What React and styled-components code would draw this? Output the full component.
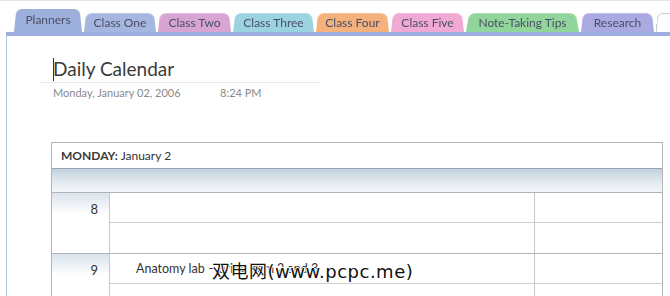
import React from 'react'
import styled, { createGlobalStyle } from 'styled-components'

const GlobalStyle = createGlobalStyle`
    html, body { margin: 0; padding: 0; background: #fff; }
    body { font-family: Lato, "Liberation Sans", sans-serif; }
`

const tabs = [
    { label: 'Planners', color: '#9db0dc', w: 68, active: true },
    { label: 'Class One', color: '#a5b6e0', w: 72 },
    { label: 'Class Two', color: '#d8a4d3', w: 73 },
    { label: 'Class Three', color: '#9bd4e0', w: 81 },
    { label: 'Class Four', color: '#f4b17c', w: 73 },
    { label: 'Class Five', color: '#f1a8d3', w: 73 },
    { label: 'Note-Taking Tips', color: '#91d59d', w: 113 },
    { label: 'Research', color: '#aba9e1', w: 73 },
    { label: '', color: '#fff', w: 40, outline: true },
]

const hours = [
    { hour: 8, items: ['', ''] },
    { hour: 9, items: ['Anatomy lab \u2013 bring item 2 and 3', ''] },
]

function App() {
    return (
        <Wrap>
            <GlobalStyle />
            <TabBar>
                {tabs.map((t, i) => (
                    <Tab key={i} $color={t.color} $w={t.w} $active={t.active} $outline={t.outline}>
                        {t.label}
                    </Tab>
                ))}
            </TabBar>
            <Strip />
            <Page>
                <TitleBlock>
                    <Caret />
                    <Title>Daily Calendar</Title>
                </TitleBlock>
                <DateLine>
                    <DateText>Monday, January 02, 2006</DateText>
                    <span>8:24 PM</span>
                </DateLine>
                <Table>
                    <DayHeader><b>MONDAY:</b> January 2</DayHeader>
                    <Band />
                    {hours.map(h => (
                        <HourRow key={h.hour}>
                            <TimeCell>{h.hour}</TimeCell>
                            {h.items.map((item, i) => (
                                <React.Fragment key={i}>
                                    <NoteCell $first={i === 0}>{item}</NoteCell>
                                    <SideCell $first={i === 0} />
                                </React.Fragment>
                            ))}
                        </HourRow>
                    ))}
                </Table>
            </Page>
            <Watermark>双电网(www.pcpc.me)</Watermark>
        </Wrap>
    )
}

const Wrap = styled.div`
    position: relative;
    width: 670px;
    height: 296px;
    overflow: hidden;
    border-top: 1px solid #e4e4e4;
    box-sizing: border-box;
    display: flex;
    flex-direction: column;
`

const TabBar = styled.div`
    display: flex;
    align-items: flex-end;
    gap: 2px;
    height: 31px;
    padding-left: 14px;
    flex-shrink: 0;
`

const Tab = styled.div`
    position: relative;
    z-index: ${p => p.$active ? 2 : 1};
    flex-shrink: 0;
    width: ${p => p.$w}px;
    height: ${p => p.$active ? 25 : 20}px;
    display: flex;
    align-items: center;
    justify-content: center;
    font-size: 12px;
    color: #4a4f66;
    white-space: nowrap;

    &::before {
        content: '';
        position: absolute;
        inset: 0;
        z-index: -1;
        background: ${p => p.$color};
        border: ${p => p.$outline ? '1px solid #cfcfcf' : 'none'};
        border-bottom: none;
        border-radius: 6px 6px 0 0;
        transform: perspective(40px) rotateX(7deg);
        transform-origin: bottom;
    }
`

const Strip = styled.div`
    height: 4px;
    margin-left: 6px;
    background: #9dafdf;
    flex-shrink: 0;
`

const Page = styled.div`
    flex: 1;
    margin-left: 6px;
    border-left: 1px solid #b8c5e6;
    padding-top: 20px;
    min-height: 0;
    overflow: hidden;
`

const TitleBlock = styled.div`
    display: flex;
    align-items: center;
    width: 267px;
    margin-left: 33px;
    padding-left: 13px;
    height: 26px;
    border-bottom: 1px solid #e8e8e8;
`

const Caret = styled.span`
    width: 1px;
    height: 23px;
    background: #333;
    margin-right: -1px;
`

const Title = styled.h1`
    margin: 0;
    font-size: 19px;
    font-weight: 400;
    color: #3a3a3a;
    line-height: 26px;
`

const DateLine = styled.div`
    display: flex;
    padding-left: 46px;
    margin-top: 3px;
    font-size: 11px;
    line-height: 14px;
    color: #8a8a8a;
`

const DateText = styled.span`
    width: 167px;
`

const Table = styled.div`
    width: 612px;
    margin: 42px 0 0 44px;
    border: 1px solid #b4b4b4;
    box-sizing: border-box;
    font-size: 12px;
    color: #333;
`

const DayHeader = styled.div`
    height: 25px;
    line-height: 25px;
    padding-left: 9px;
    border-bottom: 1px solid #93a5b7;
    b { color: #3a3a3a; }
`

const Band = styled.div`
    height: 23px;
    background: linear-gradient(to bottom, #c3d1dd, #e4ebf1 60%, #f2f5f8);
    border-bottom: 1px solid #b3b3b3;
`

const HourRow = styled.div`
    display: grid;
    grid-template-columns: 58px 425px 1fr;
    grid-template-rows: 30px 30px;
    border-bottom: 1px solid #b3b3b3;
`

const TimeCell = styled.div`
    grid-row: 1 / span 2;
    border-right: 1px solid #c8c8c8;
    background: linear-gradient(to bottom, #dbe4ec 0, #edf2f6 12px, #fff 21px);
    text-align: right;
    padding: 8px 11px 0 0;
    font-size: 13px;
    color: #333;
`

const NoteCell = styled.div`
    border-right: 1px solid #c8c8c8;
    border-bottom: ${p => p.$first ? '1px solid #cfcfcf' : 'none'};
    padding-left: 26px;
    line-height: 30px;
    font-size: 12.5px;
    white-space: nowrap;
`

const SideCell = styled.div`
    border-bottom: ${p => p.$first ? '1px solid #cfcfcf' : 'none'};
`

const Watermark = styled.div`
    position: absolute;
    left: 212px;
    top: 259px;
    font-family: "DejaVu Sans", "Noto Sans CJK SC", sans-serif;
    font-size: 18px;
    letter-spacing: 0.5px;
    line-height: 24px;
    color: #111;
    white-space: nowrap;
    text-shadow: 1px 0 0 #fff, -1px 0 0 #fff, 0 1px 0 #fff, 0 -1px 0 #fff;
`

export default App
